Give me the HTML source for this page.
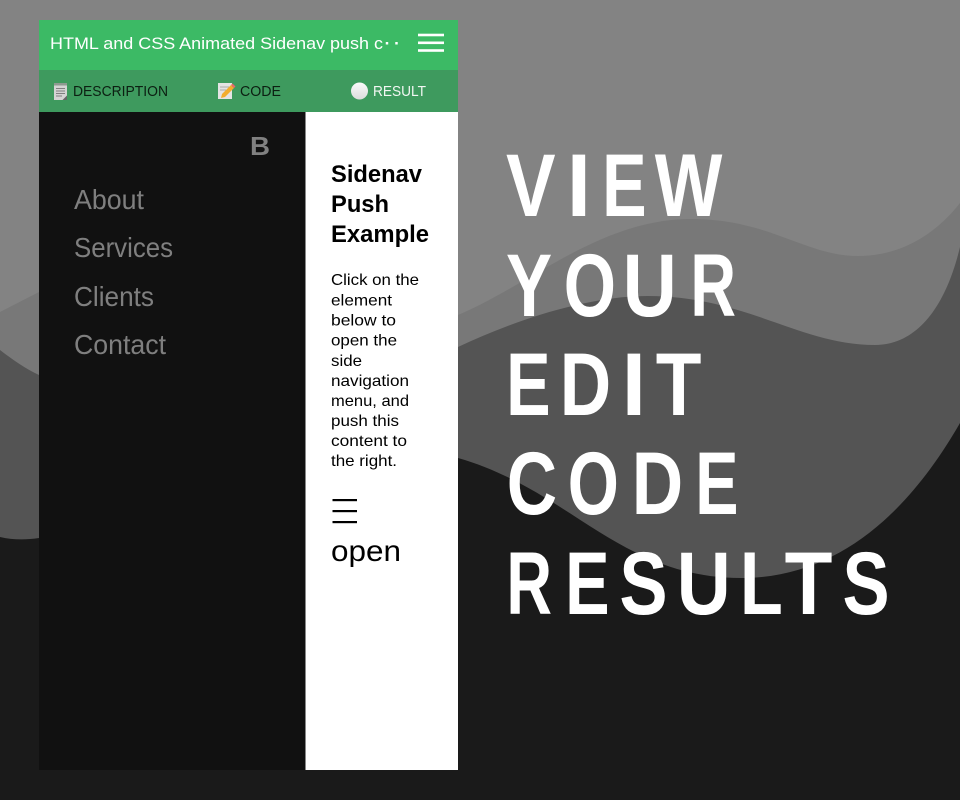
<!DOCTYPE html>
<html><head><meta charset="utf-8"><style>
html,body{margin:0;padding:0;background:#1a1a1a}
svg{display:block}
text{font-family:"Liberation Sans",sans-serif}
.h text{font-size:89px;font-weight:700;fill:#fff}
.n{font-size:27.5px;fill:#7f7f7f}
.t{font-size:15px}
.b{font-size:24px;font-weight:700;fill:#000}
.p{font-size:16px;fill:#000}
</style></head><body>
<svg width="960" height="800" viewBox="0 0 960 800" xmlns="http://www.w3.org/2000/svg">
<defs><linearGradient id="w" x1="0" y1="0" x2="0" y2="1"><stop offset="0" stop-color="#fafafa"/><stop offset="1" stop-color="#dcdcdc"/></linearGradient></defs>
<rect width="960" height="800" fill="#838383"/>
<path d="M0,312L39,292L458,315C530,285 600,219 691,219C770,219 805,256 858,256C900,256 935,235 960,203V800H0Z" fill="#787878"/>
<path d="M0,350C13,360 26,369 39,375L458,347C520,318 590,296 648,296C745,296 800,345 875,345C915,345 945,310 960,247V800H0Z" fill="#545454"/>
<path d="M0,537C13,540 26,540 39,538L458,458C570,490 620,578 741,578C840,578 910,510 960,423V800H0Z" fill="#1a1a1a"/>

<rect x="39" y="20" width="419" height="50" fill="#3cba65"/>
<rect x="39" y="70" width="419" height="42" fill="#3e9a5e"/>
<rect x="39" y="112" width="267" height="658" fill="#111"/>
<rect x="305.500" y="112" width="152.500" height="658" fill="#fff"/>

<text x="50" y="49" font-size="17" fill="#fff" textLength="333" lengthAdjust="spacingAndGlyphs">HTML and CSS Animated Sidenav push c</text>
<text x="387.500" y="49" font-size="17" fill="#fff" font-weight="700" text-anchor="middle">·</text>
<text x="397" y="49" font-size="17" fill="#fff" font-weight="700" text-anchor="middle">·</text>
<rect x="418" y="33.700" width="26" height="2.600" fill="#fff"/><rect x="418" y="41.500" width="26" height="2.600" fill="#fff"/><rect x="418" y="49.200" width="26" height="2.600" fill="#fff"/>

<rect x="54" y="84" width="13" height="16" fill="#d4d4d4"/>
<rect x="54" y="83" width="13" height="2.500" fill="#8d9a90"/>
<path d="M56,88.500H65M56,91H65M56,93.500H65M56,96H62" stroke="#808080" stroke-width="1"/>
<path d="M62.500,100L67,95.500V100Z" fill="#666"/>
<text class="t" x="73" y="96" fill="#0c1f12" textLength="95" lengthAdjust="spacingAndGlyphs">DESCRIPTION</text>

<rect x="218" y="83" width="14" height="16" fill="#e4e4e4"/>
<path d="M220,87H229M220,90H226" stroke="#aaa" stroke-width="1"/>
<path d="M222,94L231,85L234,88L225,97L221,98Z" fill="#f2ad2e"/>
<path d="M231,85L232.500,83.500L235.500,86.500L234,88Z" fill="#e86a6a"/>
<text class="t" x="240" y="96" fill="#0c1f12" textLength="41" lengthAdjust="spacingAndGlyphs">CODE</text>

<circle cx="359.500" cy="91" r="8.500" fill="url(#w)"/>
<text class="t" x="373" y="96" fill="#f2f7f3" textLength="53" lengthAdjust="spacingAndGlyphs">RESULT</text>

<text x="250" y="155" font-size="26" font-weight="700" fill="#818181" textLength="20" lengthAdjust="spacingAndGlyphs">B</text>
<text class="n" x="74" y="209" textLength="70" lengthAdjust="spacingAndGlyphs">About</text>
<text class="n" x="74" y="257" textLength="99" lengthAdjust="spacingAndGlyphs">Services</text>
<text class="n" x="74" y="306" textLength="80" lengthAdjust="spacingAndGlyphs">Clients</text>
<text class="n" x="74" y="354" textLength="92" lengthAdjust="spacingAndGlyphs">Contact</text>

<text class="b" x="331" y="182" textLength="91" lengthAdjust="spacingAndGlyphs">Sidenav</text>
<text class="b" x="331" y="212" textLength="58" lengthAdjust="spacingAndGlyphs">Push</text>
<text class="b" x="331" y="242" textLength="98" lengthAdjust="spacingAndGlyphs">Example</text>

<text class="p" x="331" y="285" textLength="88" lengthAdjust="spacingAndGlyphs">Click on the</text>
<text class="p" x="331" y="305.500" textLength="61" lengthAdjust="spacingAndGlyphs">element</text>
<text class="p" x="331" y="325.500" textLength="65" lengthAdjust="spacingAndGlyphs">below to</text>
<text class="p" x="331" y="345.500" textLength="66" lengthAdjust="spacingAndGlyphs">open the</text>
<text class="p" x="331" y="366" textLength="31" lengthAdjust="spacingAndGlyphs">side</text>
<text class="p" x="331" y="386" textLength="78" lengthAdjust="spacingAndGlyphs">navigation</text>
<text class="p" x="331" y="406" textLength="78" lengthAdjust="spacingAndGlyphs">menu, and</text>
<text class="p" x="331" y="426" textLength="68" lengthAdjust="spacingAndGlyphs">push this</text>
<text class="p" x="331" y="446" textLength="76" lengthAdjust="spacingAndGlyphs">content to</text>
<text class="p" x="331" y="466" textLength="66" lengthAdjust="spacingAndGlyphs">the right.</text>

<rect x="332.500" y="499" width="24.500" height="2.200" fill="#000"/><rect x="332.500" y="510" width="24.500" height="2.200" fill="#000"/><rect x="332.500" y="521" width="24.500" height="2.200" fill="#000"/>
<text x="331" y="561" font-size="30" fill="#000" textLength="70" lengthAdjust="spacingAndGlyphs">open</text>

<g class="h">
<text transform="translate(506 216) scale(.835 1)">V</text>
<text transform="translate(566.700 216) scale(.98 1)">I</text>
<text transform="translate(602.100 216) scale(.749 1)">E</text>
<text transform="translate(654.700 216) scale(.805 1)">W</text>

<text transform="translate(506 316) scale(.777 1)">Y</text>
<text transform="translate(563.800 316) scale(.754 1)">O</text>
<text transform="translate(622.700 316) scale(.84 1)">U</text>
<text transform="translate(690.400 316) scale(.71 1)">R</text>

<text transform="translate(506.100 415) scale(.749 1)">E</text>
<text transform="translate(559.800 415) scale(.8 1)">D</text>
<text transform="translate(621.700 415) scale(.98 1)">I</text>
<text transform="translate(655.700 415) scale(.84 1)">T</text>

<text transform="translate(506.700 514) scale(.783 1)">C</text>
<text transform="translate(567.800 514) scale(.738 1)">O</text>
<text transform="translate(631.800 514) scale(.8 1)">D</text>
<text transform="translate(695.300 514) scale(.728 1)">E</text>

<text transform="translate(506.400 614) scale(.71 1)">R</text>
<text transform="translate(565.100 614) scale(.749 1)">E</text>
<text transform="translate(619.400 614) scale(.812 1)">S</text>
<text transform="translate(676.700 614) scale(.84 1)">U</text>
<text transform="translate(739.900 614) scale(.79 1)">L</text>
<text transform="translate(784.600 614) scale(.879 1)">T</text>
<text transform="translate(842.500 614) scale(.793 1)">S</text>
</g>
</svg>
</body></html>
